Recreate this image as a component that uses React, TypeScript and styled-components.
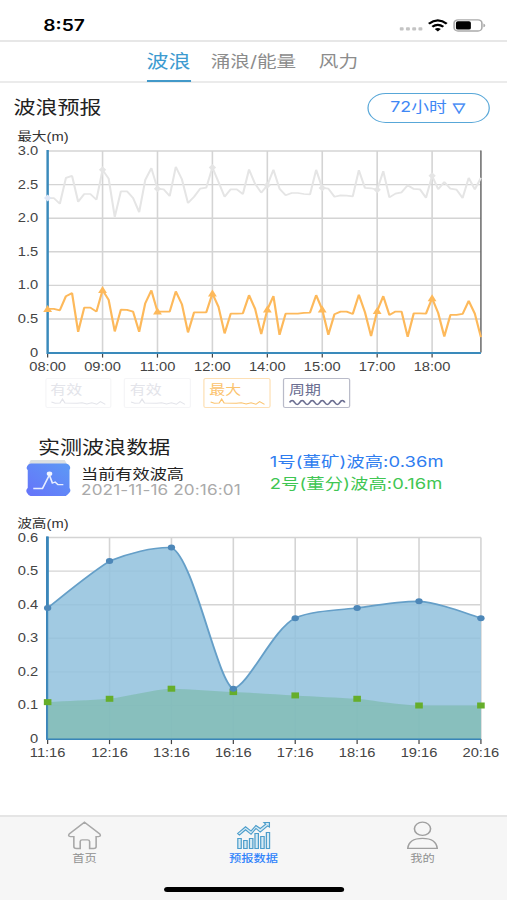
import React from 'react';
import styled, { createGlobalStyle, css } from 'styled-components';

const STRETCH = 507 / 414;
const SANS = `Inter, 'Noto Sans CJK SC', sans-serif`;
const ARIAL = `'Liberation Sans', 'Noto Sans CJK SC', sans-serif`;

const GlobalStyle = createGlobalStyle`
  * { box-sizing: border-box; }
  html, body { margin: 0; padding: 0; overflow: hidden; background: #fff; }
`;

const Viewport = styled.div`
  width: 507px;
  height: 900px;
  overflow: hidden;
`;

/* 414pt wide phone layout, widened to the window */
const Screen = styled.main`
  width: 414px;
  height: 900px;
  display: flex;
  flex-direction: column;
  background: #fff;
  color: #222;
  font-family: ${SANS};
  transform: scaleX(${STRETCH});
  transform-origin: 0 0;
`;

const StatusBar = styled.header`
  height: 42px;
  flex: none;
  padding: 10px 17px 0 35.3px;
  display: flex;
  align-items: center;
  justify-content: space-between;
  border-bottom: 2px solid #e7e7e7;
`;

const Clock = styled.span`
  font-size: 15.7px;
  font-weight: 600;
  line-height: 20px;
  padding-top: 2px;
  color: #000;
`;

const StatusIcons = styled.svg`
  width: 71px;
  height: 20px;
  display: block;
`;

const Tabs = styled.nav`
  height: 41px;
  flex: none;
  display: flex;
  padding-left: 119.7px;
  border-bottom: 2px solid #ebebeb;
`;

const Tab = styled.a<{ $active?: boolean }>`
  height: 40px;
  line-height: 38px;
  font-size: 16px;
  color: #8c8c8c;
  margin-right: 18.5px;
  white-space: nowrap;
  ${p => p.$active && css`
    width: 36.8px;
    line-height: 39px;
    font-size: 18px;
    color: #3d9bd0;
    margin-right: 15.6px;
    border-bottom: 2.5px solid #4299c9;
  `}
`;

const SectionHead = styled.div`
  height: 47px;
  flex: none;
  display: flex;
  align-items: center;
  justify-content: space-between;
  padding: 2px 14px 0 11px;
`;

const Title = styled.h2`
  margin: 0;
  font-size: 18px;
  font-weight: 400;
  line-height: 22px;
`;

const RangeButton = styled.button`
  width: 100.5px;
  height: 30px;
  padding: 0 1px 1px 0;
  border: 1.5px solid #58a7d8;
  border-radius: 15px;
  background: #fff;
  color: #3f88f5;
  font: 400 14.5px/1 ${SANS};
  display: flex;
  align-items: center;
  justify-content: center;
  gap: 5px;
`;

const Caret = styled.span`
  font: 13px/1 'DejaVu Sans', sans-serif;
  -webkit-text-stroke: 0.5px currentColor;
`;

const AxisName = styled.div`
  height: 14px;
  flex: none;
  padding-left: 14px;
  font: 12px/14px ${ARIAL};
  color: #333;
`;

const Chart = styled.svg<{ $h: number }>`
  display: block;
  flex: none;
  width: 414px;
  height: ${p => p.$h}px;
  font-family: ${ARIAL};
  font-size: 12px;
`;

const Legends = styled.div`
  display: flex;
  flex: none;
  gap: 10.2px;
  height: 30px;
  padding-left: 36.5px;
`;

const Legend = styled.div<{ $color: string; $border: string }>`
  width: 54.8px;
  height: 30px;
  padding: 2px 3px 0 3.5px;
  border: 1px solid ${p => p.$border};
  border-radius: 2px;
  color: ${p => p.$color};
  font-size: 13px;
  line-height: 17px;
`;

const LegendLine = styled.svg`
  display: block;
  width: 47px;
  height: 9px;
`;

const Measured = styled.section`
  flex: none;
  height: 79.5px;
  margin-top: 29px;
`;

const MeasuredTitle = styled(Title)`
  padding-left: 31px;
`;

const MeasuredRow = styled.div`
  display: flex;
  padding-left: 21px;
`;

const WaveBadge = styled.svg`
  flex: none;
  width: 37px;
  height: 38px;
`;

const Current = styled.div`
  flex: none;
  width: 162.3px;
  padding: 6px 0 0 8.2px;
  white-space: nowrap;
`;

const CurrentLabel = styled.div`
  font-size: 14px;
  line-height: 17px;
`;

const Timestamp = styled.div`
  font-size: 14px;
  line-height: 16px;
  letter-spacing: 0.1px;
  color: #aaa;
`;

const Readings = styled.div`
  margin-top: -8px;
  white-space: nowrap;
`;

const Reading = styled.div<{ $color: string }>`
  font-size: 15px;
  line-height: 21.5px;
  letter-spacing: 0.06px;
  color: ${p => p.$color};
`;

const TabBar = styled.footer`
  margin-top: auto;
  height: 85px;
  flex: none;
  display: grid;
  grid-template-columns: repeat(3, 1fr);
  grid-template-rows: 1fr auto;
  background: #f6f6f6;
  border-top: 2px solid #e5e5e5;
`;

const BarItem = styled.a<{ $active?: boolean }>`
  display: flex;
  flex-direction: column;
  align-items: center;
  padding-top: 4px;
  font-size: 10px;
  line-height: 14px;
  font-weight: ${p => (p.$active ? 500 : 400)};
  color: ${p => (p.$active ? '#2f83fb' : '#909090')};
`;

const BarIcon = styled.svg`
  width: 28px;
  height: 30px;
`;

const HomeIndicator = styled.div`
  grid-column: 1 / -1;
  justify-self: center;
  width: 147px;
  height: 5px;
  margin-bottom: 8px;
  border-radius: 3px;
  background: #000;
`;

const X0 = 38.9;
const X1 = 392.7;

const maxWave = [
  .65, .65, .63, .84, .885, .31, .67, .67, .61, .93, .785, .315, .64, .635, .61, .31, .735, .925,
  .61, .61, .61, .91, .72, .3, .6, .6, .6, .88, .68, .285, .58, .58, .585, .855, .65, .275,
  .64, .84, .265, .58, .58, .58, .59, .595, .855, .64, .265, .57, .61, .61, .575, .86, .6, .245,
  .62, .84, .56, .61, .61, .235, .585, .585, .58, .81, .59, .24, .56, .56, .575, .77, .58, .23,
];
const period = [
  2.3, 2.3, 2.215, 2.6, 2.63, 2.245, 2.36, 2.36, 2.275, 2.72, 2.59, 2.02, 2.4, 2.4, 2.3, 2.09, 2.57, 2.745,
  2.44, 2.43, 2.33, 2.765, 2.58, 2.225, 2.32, 2.44, 2.455, 2.755, 2.54, 2.32, 2.43, 2.43, 2.36, 2.725, 2.51, 2.38,
  2.49, 2.72, 2.44, 2.34, 2.375, 2.375, 2.36, 2.355, 2.72, 2.45, 2.44, 2.32, 2.34, 2.335, 2.325, 2.715, 2.45, 2.445,
  2.425, 2.7, 2.31, 2.365, 2.385, 2.49, 2.435, 2.43, 2.305, 2.63, 2.43, 2.54, 2.44, 2.425, 2.3, 2.6, 2.43, 2.6,
];
const forecastHours = ['08:00', '09:00', '11:00', '12:00', '14:00', '15:00', '17:00', '18:00'];

function ForecastChart() {
  const top = 7;
  const unit = 67.2;
  const bottom = top + 3 * unit;
  const x = (i: number) => X0 + (i * (X1 - X0)) / 71;
  const y = (v: number) => bottom - v * unit;
  const line = (d: number[]) => d.map((v, i) => `${x(i)},${y(v)}`).join(' ');
  return (
    <Chart $h={234}>
      {[0, 0.5, 1, 1.5, 2, 2.5, 3].map(v => (
        <g key={v}>
          {v > 0 && <line x1={X0} x2={X1} y1={y(v)} y2={y(v)} stroke="#d4d4d4" strokeWidth="1.4" />}
          <text x="31.2" y={y(v) + 4.1} textAnchor="end" fill="#444">{v ? v.toFixed(1) : '0'}</text>
        </g>
      ))}
      {forecastHours.map((t, k) => (
        <g key={t}>
          {k > 0 && <line x1={x(k * 9)} x2={x(k * 9)} y1={top} y2={bottom} stroke="#d4d4d4" strokeWidth="1.3" />}
          <line x1={x(k * 9)} x2={x(k * 9)} y1={bottom} y2={bottom + 5} stroke="#444" />
          <text x={x(k * 9)} y={bottom + 18.8} textAnchor="middle" fill="#444">{t}</text>
        </g>
      ))}
      <line x1={X1} x2={X1} y1={top - .5} y2={bottom} stroke="#666" strokeWidth="1.2" />
      <path d={`M${X0} ${top - 1}V${bottom + .5}H${X1}`} fill="none" stroke="#3a8abb" strokeWidth="2" />
      <polyline points={line(period)} fill="none" stroke="#e5e5e5" strokeWidth="1.7" strokeLinejoin="bevel" />
      {period.map((v, i) => i % 9 === 0 && (
        <path key={i} d={`M${x(i)} ${y(v) - 3.5}l3 3.5-3 3.5-3-3.5z`} fill={i ? '#e5e5e5' : '#dfe7f7'} />
      ))}
      <polyline points={line(maxWave)} fill="none" stroke="#fdb95b" strokeWidth="1.8" strokeLinejoin="bevel" />
      {maxWave.map((v, i) => i % 9 === 0 && (
        <path key={i} d={`M${x(i)} ${y(v) - 4}l3.6 7h-7.2z`} fill="#fdb95b" />
      ))}
    </Chart>
  );
}

/* Each point carries the [dx, dv] offsets of its incoming and outgoing curve handles,
   dx in column widths and dv in metres */
type Handle = [number, number];
interface Sample { v: number; in?: Handle; out?: Handle }

const station1: Sample[] = [
  { v: .39, out: [.33, .05] },
  { v: .53, in: [-.3, -.035], out: [.3, .022] },
  { v: .57, in: [-.3, .002], out: [.36, -.03] },
  { v: .15, in: [-.26, .02], out: [.25, .01] },
  { v: .36, in: [-.35, -.03], out: [.26, .022] },
  { v: .39, in: [-.3, -.006], out: [.3, .008] },
  { v: .41, in: [-.3, .001], out: [.3, -.004] },
  { v: .36, in: [-.3, .018] },
];
const station2: Sample[] = [
  { v: .11, out: [.3, .003] },
  { v: .12, in: [-.3, -.004], out: [.3, .008] },
  { v: .15, in: [-.3, -.003], out: [.3, -.001] },
  { v: .14, in: [-.3, .002], out: [.3, -.002] },
  { v: .13, in: [-.3, .002], out: [.3, -.003] },
  { v: .12, in: [-.3, .003], out: [.3, -.006] },
  { v: .1, in: [-.3, .001], out: [.3, 0] },
  { v: .1, in: [-.3, 0] },
];
const measuredHours = ['11:16', '12:16', '13:16', '16:16', '17:16', '18:16', '19:16', '20:16'];

function MeasuredChart() {
  const top = 6.5;
  const unit = 336;
  const bottom = top + 0.6 * unit;
  const x = (i: number) => X0 + (i * (X1 - X0)) / 7;
  const y = (v: number) => bottom - v * unit;
  const at = (i: number, v: number, h: Handle = [0, 0]) => `${x(i + h[0])} ${y(v + h[1])}`;
  const curve = (d: Sample[]) =>
    d.map((s, i) => (i === 0
      ? `M${at(0, s.v)}`
      : `C${at(i - 1, d[i - 1].v, d[i - 1].out)} ${at(i, s.v, s.in)} ${at(i, s.v)}`)).join('');
  const close = `L${X1} ${bottom}L${X0} ${bottom}Z`;
  return (
    <Chart $h={234}>
      {[0, .1, .2, .3, .4, .5, .6].map(v => (
        <g key={v}>
          {v > 0 && <line x1={X0} x2={X1} y1={y(v)} y2={y(v)} stroke="#d4d4d4" strokeWidth="1.4" />}
          <text x="31.2" y={y(v) + 4} textAnchor="end" fill="#444">{v ? v.toFixed(1) : '0'}</text>
        </g>
      ))}
      {measuredHours.map((t, i) => (
        <g key={t}>
          {i > 0 && <line x1={x(i)} x2={x(i)} y1={top} y2={bottom} stroke="#d4d4d4" strokeWidth="1.3" />}
          <line x1={x(i)} x2={x(i)} y1={bottom} y2={bottom + 5} stroke="#444" />
          <text x={x(i)} y={bottom + 18} textAnchor="middle" fill="#444">{t}</text>
        </g>
      ))}
      <path d={`M${X0} ${top - 1}V${bottom}H${X1}`} fill="none" stroke="#3a8abb" strokeWidth="2" />
      <path d={curve(station1) + close} fill="#92c1dd" fillOpacity=".86" />
      <path d={curve(station2) + close} fill="#7dbaae" fillOpacity=".7" />
      <path d={`M${X0 - .6} ${top - 1}V${bottom}H${X1}`} fill="none" stroke="#3a84b8" strokeWidth="1.4" />
      <path d={curve(station1)} fill="none" stroke="#659fc8" strokeWidth="1.6" />
      {station2.map((s, i) => <rect key={i} x={x(i) - 3.1} y={y(s.v) - 3} width="6.2" height="6" fill="#66ae2b" />)}
      {station1.map((s, i) => <circle key={i} cx={x(i)} cy={y(s.v)} r="3" fill="#4d87b8" />)}
    </Chart>
  );
}

const smallWave = 'M1 4L4 5.2L8 5L10 1L12 5L22 5.3L26 4.8L30 6L34 4.8L38 6.3L41 3.7L45 6.3';
const sineWave = 'M.5 4.5q2-4 4.1 0t4.1 0t4.1 0t4.1 0t4.1 0t4.1 0t4.1 0t4.1 0t4.1 0t4.1 0t4.1 0';
const legends = [
  { name: '有效', color: '#e3e4ea', border: '#f5f5f7', d: smallWave },
  { name: '有效', color: '#e3e4ea', border: '#f5f5f7', d: smallWave },
  { name: '最大', color: '#fbc36e', border: '#fde0b5', d: smallWave },
  { name: '周期', color: '#6b6e91', border: '#b9bbc9', d: sineWave },
];

export default function App() {
  return (
    <Viewport>
      <GlobalStyle />
      <Screen>
        <StatusBar>
          <Clock>8:57</Clock>
          <StatusIcons viewBox="0 0 71 20">
            <g fill="#c4c4c4">
              {[.4, 5.5, 10.6, 15.7].map(x => <rect key={x} x={x} y="12.2" width="3.2" height="3.4" rx=".8" />)}
            </g>
            <g fill="none" stroke="#000" strokeWidth="2.1">
              <path d="M24.2 8.8Q31.5 2.1 38.800 8.800" />
              <path d="M27 11.800Q31.500 7.900 36 11.800" />
            </g>
            <path d="M31.500 16.600l-2.500-2.700q2.500-1.900 5 0z" fill="#000" />
            <rect x="44.800" y="4.800" width="22.700" height="11.200" rx="3.200" fill="none" stroke="#aaa" strokeWidth="1.300" />
            <rect x="46.300" y="6.300" width="12.200" height="8.200" rx="1.600" fill="#000" />
            <path d="M68.700 8.500q1.500.6 1.500 1.900t-1.500 1.900z" fill="#aaa" />
          </StatusIcons>
        </StatusBar>
        <Tabs>
          <Tab $active>波浪</Tab>
          <Tab>涌浪/能量</Tab>
          <Tab>风力</Tab>
        </Tabs>
        <SectionHead>
          <Title>波浪预报</Title>
          <RangeButton>72小时<Caret>▽</Caret></RangeButton>
        </SectionHead>
        <AxisName>最大(m)</AxisName>
        <ForecastChart />
        <Legends>
          {legends.map((l, i) => (
            <Legend key={i} $color={l.color} $border={l.border}>
              {l.name}
              <LegendLine viewBox="0 0 47 9">
                <path d={l.d} fill="none" stroke="currentColor" strokeWidth={i === 3 ? 1.5 : 1} />
              </LegendLine>
            </Legend>
          ))}
        </Legends>
        <Measured>
          <MeasuredTitle>实测波浪数据</MeasuredTitle>
          <MeasuredRow>
            <WaveBadge viewBox="0 0 36 38" preserveAspectRatio="none">
              <defs>
                <linearGradient id="badge" x1="1" y1="0" x2="0" y2="1">
                  <stop offset="0" stopColor="#5c9af5" />
                  <stop offset="1" stopColor="#6673fa" />
                </linearGradient>
              </defs>
              <path d="M4 1h27l3 7H1z" fill="#dbe0e2" />
              <path d="M4 4.5h28q2 0 3 2.5t-.2 4v18q1.4 2.5 0 4.5t-3 3.5h-28q-2-1-3-3.5t.8-4.5v-18q-1.5-1.5-.4-4t2.8-2.5z" fill="url(#badge)" />
              <path d="M6 29.5h7.3l5.5-13.5 2.4 8 2.2-1 2.2 2.7h4.3" fill="none" stroke="#e6edff" strokeWidth="1.3" />
              <circle cx="18.9" cy="14.8" r="2.2" fill="#f2f5ff" />
            </WaveBadge>
            <Current>
              <CurrentLabel>当前有效波高</CurrentLabel>
              <Timestamp>2021-11-16 20:16:01</Timestamp>
            </Current>
            <Readings>
              <Reading $color="#2f7df0">1号(董矿)波高:0.36m</Reading>
              <Reading $color="#3fc653">2号(董分)波高:0.16m</Reading>
            </Readings>
          </MeasuredRow>
        </Measured>
        <AxisName>波高(m)</AxisName>
        <MeasuredChart />
        <TabBar>
          <BarItem>
            <BarIcon viewBox="0 0 28 30" fill="none" stroke="#a8a8a8" strokeWidth="1.3">
              <path d="M14 1.2L26.5 13Q27.8 15.2 25.5 15.6H23.5V25.5Q23.5 27.5 21.5 27.5H18.2V20.5Q18 18.8 16.5 18.8H12Q10.6 18.8 10.5 20.5V27.5H7.5Q5.3 27.5 5.3 25.5V15.6H2.5Q.2 15.2 1.5 13Z" />
            </BarIcon>
            首页
          </BarItem>
          <BarItem $active>
            <BarIcon viewBox="0 0 28 30" fill="#d8ebf4" stroke="#4c9dcb" strokeWidth="1">
              <path d="M1 12.5L7.5 5.8L12 10L16 4.5L19.5 7.5L24 3.2L22.5 1.5H27V6L25.5 4.8L19.5 11L16 7.5L12 13.3L7.5 8.8L2.5 14Z" />
              <path d="M1.2 17.5h2.8v10H1.2zM6 19.5h2.8v8H6zM10.7 17.5h2.8v10h-2.8zM15.2 12.5H18v15h-2.8zM19.9 15.5h2.8v12h-2.8zM24.5 11.5h2.7v16h-2.7z" />
            </BarIcon>
            预报数据
          </BarItem>
          <BarItem>
            <BarIcon viewBox="0 0 28 30" fill="none" stroke="#a0a0a0" strokeWidth="1.3">
              <circle cx="14" cy="7.8" r="6.6" />
              <path d="M2 27.3Q2.8 17.3 14 17.3T26 27.3Z" />
            </BarIcon>
            我的
          </BarItem>
          <HomeIndicator />
        </TabBar>
      </Screen>
    </Viewport>
  );
}
